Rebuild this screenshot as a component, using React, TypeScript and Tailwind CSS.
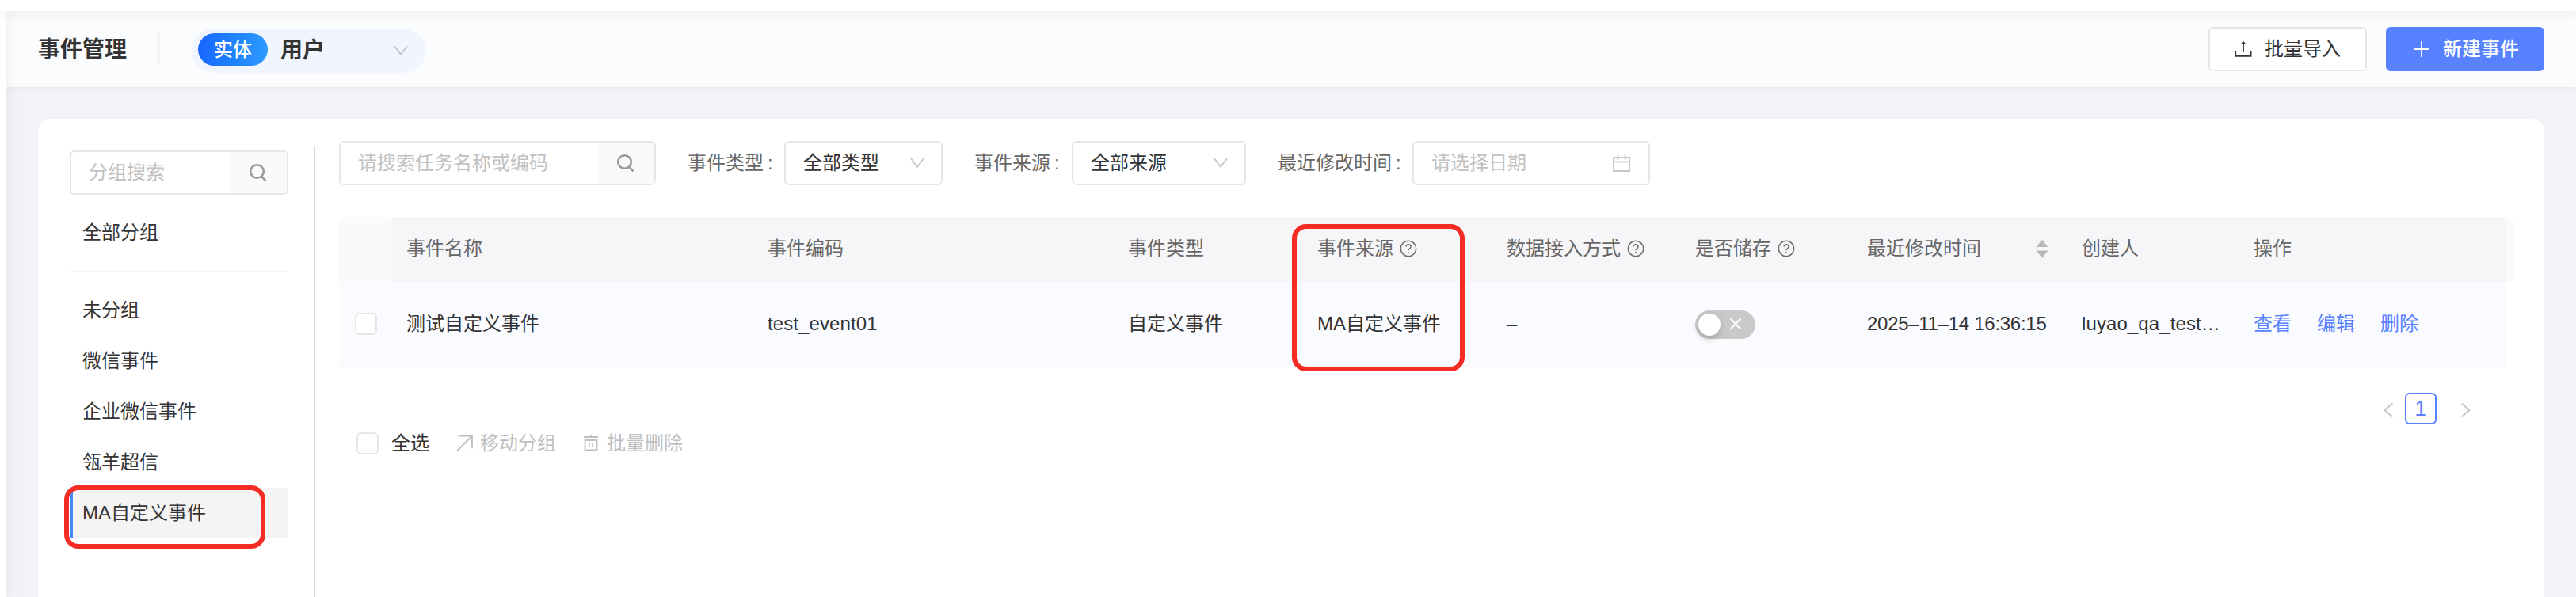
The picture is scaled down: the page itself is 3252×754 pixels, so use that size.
import React from "react";

type IconProps = { className?: string };

const SearchIcon = ({ className = "" }: IconProps) => (
  <svg className={`h-[24px] w-[24px] ${className}`} viewBox="0 0 24 24" fill="none" stroke="#999" strokeWidth="2.6">
    <circle cx="10.500" cy="10.500" r="8.3" />
    <path d="M15.800 16.500l5.600 5.800" />
  </svg>
);

const ChevronDown = ({ className = "" }: IconProps) => (
  <svg className={`h-[14px] w-[18px] ${className}`} viewBox="0 0 18 14" fill="none" stroke="#c2c2c2" strokeWidth="1.6">
    <path d="M1 1.2l8 10.6 8-10.6" />
  </svg>
);

const Question = () => (
  <svg className="ml-[8px] h-[22px] w-[22px]" viewBox="0 0 22 22" fill="none" stroke="#6e6e6e" strokeWidth="1.5">
    <circle cx="11" cy="11" r="9.700" />
    <path d="M8.100 8.600a2.900 2.900 0 1 1 4.300 2.500c-1 .6-1.400 1-1.400 2.200" />
    <path d="M11 14.900v1.700" />
  </svg>
);

const CalendarIcon = () => (
  <svg className="h-[24px] w-[24px]" viewBox="0 0 24 24" fill="none" stroke="#c6c6c6" strokeWidth="1.8">
    <path d="M2 5h20v17H2zM2 10.4h20M7.4 1.8v6M16.6 1.8v6" />
  </svg>
);

const Checkbox = ({ className = "" }: IconProps) => (
  <span className={`block h-7 w-7 shrink-0 rounded-[6px] border-2 border-[#e6e6e6] bg-white ${className}`} />
);

function SearchBox({ placeholder, className }: { placeholder: string; className: string }) {
  return (
    <div className={`flex h-14 overflow-hidden rounded-[6px] border-2 border-[#e6e6e6] bg-white ${className}`}>
      <span className="flex-1 pl-[22px] leading-[52px] text-[#c1c1c1]">{placeholder}</span>
      <span className="flex w-[72px] items-center justify-center bg-[#fafafa]">
        <SearchIcon />
      </span>
    </div>
  );
}

function Select({ label, value, className, labelClass }: { label: string; value: string; className: string; labelClass: string }) {
  return (
    <div className="flex items-center">
      <span className={`flex text-[#666] ${labelClass}`}>
        {label}
        <span className="ml-[5px]">:</span>
      </span>
      <div className={`flex h-14 items-center justify-between rounded-[6px] border-2 border-[#e6e6e6] bg-white pl-[22px] pr-[21px] ${className}`}>
        <span>{value}</span>
        <ChevronDown />
      </div>
    </div>
  );
}

const groups = ["未分组", "微信事件", "企业微信事件", "瓴羊超信"];

export default function App() {
  return (
    <div className="flex h-[754px] w-full flex-col overflow-hidden bg-[#f2f3f8] font-['Liberation_Sans','Noto_Sans_CJK_SC',sans-serif] text-[24px] leading-[36px] text-[#333]">
      <div className="relative z-20 h-[14px] shrink-0 bg-white shadow-[0_0_18px_rgba(0,21,41,0.1)]" />
      <div className="flex min-h-0 flex-1">
        <div className="relative z-10 w-2 shrink-0 bg-white shadow-[0_0_18px_rgba(0,0,0,0.1)]" />
        <div className="flex min-w-0 flex-1 flex-col">
          <header className="flex h-24 shrink-0 items-center bg-[#fbfcfe] pl-10 pr-10 shadow-[0_1px_6px_rgba(0,0,40,0.06)]">
            <h1 className="w-[152px] pt-[2px] text-[28px] font-bold leading-[40px]">事件管理</h1>
            <div className="h-10 w-[2px] bg-[#f3f3f5]" />
            <div className="ml-10 mt-1 flex h-14 w-[296px] items-center rounded-full bg-[#f1f5fe] pl-2 pr-[23px]">
              <span className="mb-[3px] h-[41px] w-[88px] rounded-full bg-gradient-to-r from-[#1966ff] to-[#2e9aff] text-center font-medium leading-[42px] text-white">
                实体
              </span>
              <span className="ml-4 flex-1 text-[28px] font-bold leading-[40px]">用户</span>
              <ChevronDown />
            </div>
            <div className="ml-auto flex gap-6">
              <button className="flex h-14 w-[200px] items-center rounded-[6px] border-2 border-[#e6e6e6] bg-white pl-[31px]">
                <svg className="h-[22px] w-[22px]" viewBox="0 0 22 22" fill="none" stroke="#333" strokeWidth="1.8">
                  <path d="M1.2 13v6.8h19.4V13M11 15V3.5" />
                  <path d="M11 .8l3.4 4H7.6z" fill="#333" stroke="none" />
                </svg>
                <span className="ml-[16px]">批量导入</span>
              </button>
              <button className="flex h-14 w-[200px] items-center rounded-[6px] bg-[#5781ff] pl-[34px] text-white">
                <svg className="h-[22px] w-[22px]" viewBox="0 0 22 22" fill="none" stroke="#fff" strokeWidth="1.8">
                  <path d="M11 1v20M1 11h20" />
                </svg>
                <span className="ml-[16px] font-medium">新建事件</span>
              </button>
            </div>
          </header>

          <main className="mx-10 mt-10 flex flex-1 rounded-t-2xl bg-white pl-10 pr-10">
            <aside className="flex w-[276px] shrink-0 flex-col pt-10">
              <SearchBox placeholder="分组搜索" className="w-[276px]" />
              <div className="mt-4 h-16 pl-4 leading-[64px]">全部分组</div>
              <div className="mt-4 h-[2px] bg-[#f6f6f6]" />
              <ul className="mt-4">
                {groups.map((g) => (
                  <li key={g} className="h-16 pl-4 leading-[64px]">
                    {g}
                  </li>
                ))}
                <li className="relative h-16 border-l-4 border-[#4989ff] bg-[#f4f4f4] pl-3 leading-[64px]">
                  MA自定义事件
                  <span className="absolute -left-[11px] -top-[3px] h-[80px] w-[254px] rounded-[18px] border-[6px] border-[#f42c24]" />
                </li>
              </ul>
            </aside>
            <div className="ml-8 mt-[34px] w-[2px] shrink-0 bg-[#d9d9d9]" />

            <section className="ml-[30px] flex min-w-0 flex-1 flex-col pt-7">
              <div className="flex gap-10">
                <SearchBox placeholder="请搜索任务名称或编码" className="w-[400px]" />
                <Select label="事件类型" value="全部类型" labelClass="w-[122px]" className="w-[200px]" />
                <Select label="事件来源" value="全部来源" labelClass="w-[123px]" className="w-[220px]" />
                <div className="flex items-center">
                  <span className="flex w-[170px] text-[#666]">
                    最近修改时间<span className="ml-[5px]">:</span>
                  </span>
                  <div className="flex h-14 w-[300px] items-center justify-between rounded-[6px] border-2 border-[#e6e6e6] bg-white pl-[22px] pr-[22px]">
                    <span className="text-[#c1c1c1]">请选择日期</span>
                    <CalendarIcon />
                  </div>
                </div>
              </div>

              <div className="relative mt-10">
                <div className="flex h-[82px] items-center overflow-hidden rounded-t-[8px] bg-[#f6f6f9] leading-[80px] text-[#666]">
                  <span className="h-full w-[65px] bg-[#fafafa]" />
                  <span className="h-full w-[456px] pl-5">事件名称</span>
                  <span className="h-full w-[455px] pl-5">事件编码</span>
                  <span className="h-full w-[239px] pl-5">事件类型</span>
                  <span className="flex h-[80px] w-[239px] items-center self-start pl-5">事件来源<Question /></span>
                  <span className="flex h-[80px] w-[238px] items-center self-start pl-5">数据接入方式<Question /></span>
                  <span className="flex h-[80px] w-[217px] items-center self-start pl-5">是否储存<Question /></span>
                  <span className="flex h-[80px] w-[271px] items-center justify-between self-start pl-5 pr-[22px]">
                    最近修改时间
                    <svg className="h-[24px] w-[16px] shrink-0" viewBox="0 0 16 24" fill="#b9b9bb">
                      <path d="M8 .8l7.500 9.200H.5zM8 23.700l7.500-9.200H.5z" />
                    </svg>
                  </span>
                  <span className="h-full w-[217px] pl-5">创建人</span>
                  <span className="h-full flex-1 pl-5">操作</span>
                  <span className="h-full w-2 bg-[#fafafa]" />
                </div>
                <div className="mr-2 flex h-[108px] items-center border-b-2 border-[#f5f6f8] bg-[#fafbff]">
                  <span className="w-[65px] pl-5"><Checkbox /></span>
                  <span className="w-[456px] pl-5">测试自定义事件</span>
                  <span className="w-[455px] pl-5 tracking-[0.1px]">test_event01</span>
                  <span className="w-[239px] pl-5">自定义事件</span>
                  <span className="w-[239px] pl-5">MA自定义事件</span>
                  <span className="w-[238px] pl-5">–</span>
                  <span className="w-[217px] pl-[20px]">
                    <span className="mt-[2px] flex h-9 w-[76px] items-center rounded-full bg-[#c9c9c9] pl-1">
                      <span className="h-7 w-7 rounded-full bg-white shadow-[0_4px_8px_rgba(0,35,11,0.2)]" />
                      <svg className="mb-[2px] ml-[11px] h-[16px] w-[16px]" viewBox="0 0 16 16" stroke="#fff" strokeWidth="2">
                        <path d="M1.500 1l13 14M14.500 1l-13 14" />
                      </svg>
                    </span>
                  </span>
                  <span className="w-[271px] whitespace-nowrap pl-5 tracking-[-0.28px]">2025–11–14 16:36:15</span>
                  <span className="w-[217px] pl-5 tracking-[0.1px]">luyao_qa_test…</span>
                  <span className="flex gap-8 pl-5 text-[#5781ff]">
                    <a>查看</a>
                    <a>编辑</a>
                    <a>删除</a>
                  </span>
                </div>
                <span className="absolute left-[1203px] top-[9px] h-[186px] w-[218px] rounded-[18px] border-[6px] border-[#f42c24]" />
              </div>

              <div className="mt-8 flex h-10 items-center justify-end pr-[52px]">
                <svg className="mt-[3px] h-[20px] w-[14px]" viewBox="0 0 14 20" fill="none" stroke="#c4c4c4" strokeWidth="1.8">
                  <path d="M12.500 1.500L2.500 10l10 8.500" />
                </svg>
                <span className="ml-[14px] h-10 w-10 rounded-[6px] border-2 border-[#5781ff] text-center text-[28px] leading-[36px] text-[#5781ff]">1</span>
                <svg className="ml-[30px] mt-[3px] h-[20px] w-[14px]" viewBox="0 0 14 20" fill="none" stroke="#c4c4c4" strokeWidth="1.8">
                  <path d="M1.500 1.500l10 8.500-10 8.500" />
                </svg>
              </div>

              <div className="mt-[6px] flex h-9 items-center pl-[22px] text-[#bfbfbf]">
                <Checkbox />
                <span className="ml-4 text-[#333]">全选</span>
                <svg className="ml-[33px] h-[24px] w-[24px]" viewBox="0 0 24 24" fill="none" stroke="#bfbfbf" strokeWidth="1.8">
                  <path d="M4.500 2.500H21v16M21 2.500L1.500 22" />
                </svg>
                <span className="ml-[7px]">移动分组</span>
                <svg className="mb-[3px] ml-[34px] h-[22px] w-[20px]" viewBox="0 0 20 22" fill="none" stroke="#bfbfbf" strokeWidth="1.8">
                  <path d="M1 4h18M10 1.500V4M2.500 8h15v12.500h-15zM8 12v5M12 12v5" />
                </svg>
                <span className="ml-[10px]">批量删除</span>
              </div>
            </section>
          </main>
        </div>
      </div>
    </div>
  );
}
